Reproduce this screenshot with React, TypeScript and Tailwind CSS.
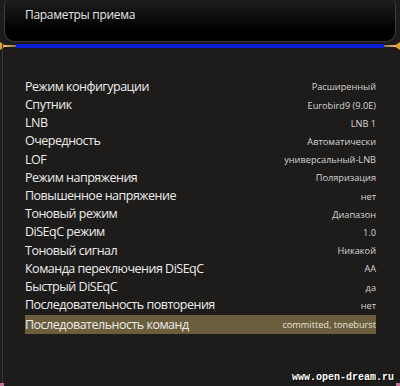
import React from 'react';

const ROWS: [string, string][] = [
  ['Режим конфигурации', 'Расширенный'],
  ['Спутник', 'Eurobird9 (9.0E)'],
  ['LNB', 'LNB 1'],
  ['Очередность', 'Автоматически'],
  ['LOF', 'универсальный-LNB'],
  ['Режим напряжения', 'Поляризация'],
  ['Повышенное напряжение', 'нет'],
  ['Тоновый режим', 'Диапазон'],
  ['DiSEqC режим', '1.0'],
  ['Тоновый сигнал', 'Никакой'],
  ['Команда переключения DiSEqC', 'AA'],
  ['Быстрый DiSEqC', 'да'],
  ['Последовательность повторения', 'нет'],
  ['Последовательность команд', 'committed, toneburst'],
];

function Pin({ side }: { side: 'left' | 'right' }) {
  // small gold arrow tips at both ends of the blue rule
  return (
    <svg
      width="16"
      height="8"
      viewBox="0 0 16 8"
      className={`absolute top-[-2px] ${side === 'left' ? 'left-0' : 'right-0 rotate-180'}`}
    >
      <path d="M0 0 L6 4 L0 8 Z" fill="#e0a040" />
      <path d="M4 3 L16 3.5 L16 4.5 L4 5 Z" fill="#f0c070" />
    </svg>
  );
}

export default function App() {
  return (
    <div
      className="relative w-[400px] h-[386px] overflow-hidden bg-[#1e1c1b] flex flex-col"
      style={{ fontFamily: '"Open Sans", "Noto Sans", sans-serif' }}
    >
      {/* header */}
      <div className="mx-[4px] h-[42px] rounded-b-[10px] rounded-t-[4px] border border-t-0 border-[#3c3c3c] bg-gradient-to-b from-[#1d1d1d] via-[#0a0a0a] to-black flex items-center px-[20px] pb-[12px]">
        <span className="text-[12px] text-[#e6e6e6] tracking-[-0.3px]">Параметры приема</span>
      </div>

      {/* blue rule */}
      <div className="relative mt-[2px] h-[4px]">
        <div className="mx-[16px] h-[4px] bg-[#0c1ed8]" />
        <Pin side="left" />
        <Pin side="right" />
      </div>

      {/* settings list */}
      <div className="mt-[30px] mx-[25px] w-[351px] flex flex-col">
        {ROWS.map(([label, value], i) => {
          const active = i === ROWS.length - 1;
          return (
            <div
              key={label}
              className={`flex items-center justify-between ${active ? 'h-[19px] mt-[1px] bg-[#6a5e3c]' : 'h-[18.2px]'}`}
            >
              <span className="text-[12.5px] leading-none text-[#ececec] tracking-[-0.5px]">{label}</span>
              <span className={`text-[9.2px] leading-none ${active ? 'text-[#e8e4d8]' : 'text-[#d4d4d4]'}`}>{value}</span>
            </div>
          );
        })}
      </div>

      {/* left frame line */}
      <div className="absolute left-[2px] top-[44px] bottom-[2px] w-px bg-[#3a3836]" />

      {/* watermark */}
      <span
        className="absolute right-[6px] bottom-[1px] text-[10px] font-bold text-white"
        style={{ fontFamily: '"Liberation Mono", monospace', textShadow: '1px 1px 0 #000' }}
      >
        www.open-dream.ru
      </span>
      <div className="absolute left-0 bottom-0 w-[4px] h-[3px] bg-[#c07090]" />
      <div className="absolute right-0 bottom-0 w-[4px] h-[3px] bg-[#c07090]" />
    </div>
  );
}
